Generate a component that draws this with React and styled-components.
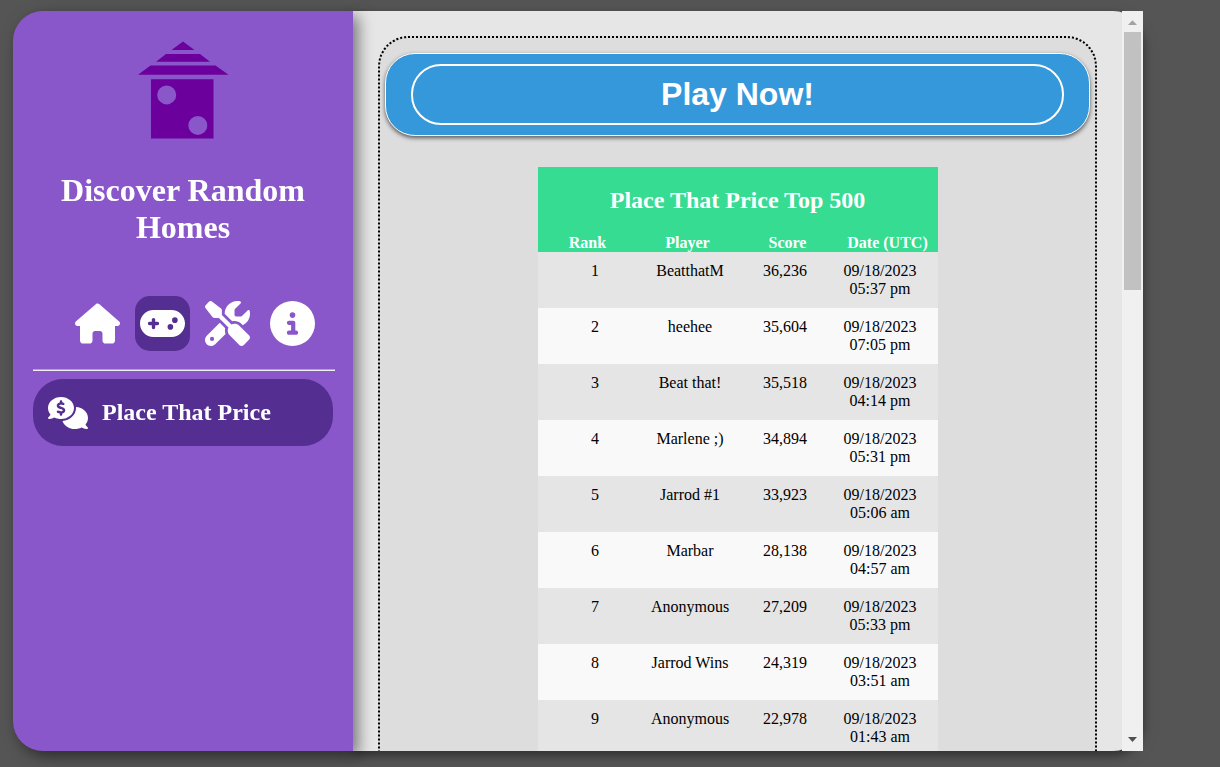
import React from "react";
import styled, { createGlobalStyle } from "styled-components";
import {
  FaHouse,
  FaGamepad,
  FaScrewdriverWrench,
  FaCircleInfo,
  FaCommentsDollar,
} from "react-icons/fa6";

const GlobalStyle = createGlobalStyle`
  *, *::before, *::after { box-sizing: border-box; }
  body {
    margin: 0;
    background: #555;
    color: #000;
    font-family: "Liberation Serif", "Times New Roman", serif;
    font-size: 16px;
    line-height: 18px;
  }
`;

const Page = styled.div`
  display: flex;
  height: 100vh;
  padding: 11px 77px 16px 13px;
`;

const Sidebar = styled.aside`
  position: relative;
  z-index: 1;
  display: flex;
  flex-direction: column;
  flex: 0 0 340px;
  min-width: 0;
  padding: 29px 20px 20px;
  background: #8a57cb;
  border-radius: 30px 0 0 30px;
  box-shadow: 5px 5px 15px rgba(0, 0, 0, 0.5);
`;

const Logo = styled.svg`
  width: 100px;
  height: 100px;
  align-self: center;
  fill: #6b009c;
`;

const SiteTitle = styled.h1`
  margin: 32px 0 50px;
  font-size: 32px;
  line-height: 37px;
  color: #fff;
  text-align: center;
`;

const Nav = styled.nav`
  display: flex;
  gap: 10px;
  padding-left: 37px;
`;

const NavButton = styled.button`
  display: flex;
  align-items: center;
  justify-content: center;
  width: 55px;
  height: 55px;
  padding: 0;
  border: 0;
  border-radius: 15px;
  background: ${(p) => (p.$active ? "#542e90" : "transparent")};
  color: #fff;
  font-size: 45px;
  cursor: pointer;
  svg { flex: none; }
`;

const Divider = styled.hr`
  align-self: stretch;
  margin: 18px -2px 8px 0;
  border: solid;
  border-color: #b3a3c4 #eee #eee #b3a3c4;
  border-width: 1px 0;
`;

const GameLink = styled.a`
  display: flex;
  align-items: center;
  gap: 14px;
  height: 67px;
  padding: 0 15px;
  border-radius: 30px;
  background: #542e90;
  color: #fff;
  font-size: 24px;
  font-weight: bold;
  line-height: 27px;
  text-decoration: none;
  svg { width: 40px; height: 32px; }
`;

const Main = styled.main`
  position: relative;
  flex: 1;
  min-width: 0;
  border-radius: 0 30px 30px 0;
  box-shadow: 0 4px 8px rgba(0, 0, 0, 0.4), 0 6px 20px rgba(0, 0, 0, 0.1);
`;

const ScrollArea = styled.div`
  height: 100%;
  padding: 25px 46px 25px 25px;
  overflow-y: auto;
  scrollbar-width: none;
  background: #e6e6e6;
  border-radius: 0 30px 30px 0;
`;

const Board = styled.section`
  display: flex;
  flex-direction: column;
  align-items: center;
  gap: 31px;
  padding: 15px 5px 60px;
  border: 2px dotted #000;
  border-radius: 30px;
  background: #ddd;
`;

const PlayButton = styled.button`
  align-self: stretch;
  padding: 10px 25px;
  border: 1px solid #fff;
  border-radius: 30px;
  background: #3498db;
  box-shadow: 0 2px 4px rgba(0, 0, 0, 0.6);
  color: #fff;
  font: bold 32px/37px "Liberation Sans", Arial, sans-serif;
  cursor: pointer;
`;

const PlayLabel = styled.span`
  display: block;
  padding: 10px;
  border: 2px solid #fff;
  border-radius: 30px;
`;

const Scores = styled.table`
  display: block;
  width: 400px;
  text-align: center;
`;

const ScoresHead = styled.thead`
  display: block;
  padding-top: 20px;
  background: #36dc92;
  color: #fff;
`;

const ScoresBody = styled.tbody`
  display: block;
`;

const HeadRow = styled.tr`
  display: grid;
  grid-template-columns: repeat(4, 1fr);
`;

const ScoresTitle = styled.th`
  grid-column: 1 / -1;
  padding: 0 0 20px;
  font-size: 24px;
  line-height: 27px;
`;

const HeadCell = styled.th`
  padding: 0;
`;

const ScoreRow = styled.tr`
  display: grid;
  grid-template-columns: repeat(4, 1fr);
  padding: 10px;
  background: #e5e5e5;
  &:nth-child(even) { background: #f9f9f9; }
`;

const ScoreCell = styled.td`
  padding: 0;
`;

const Scrollbar = styled.div`
  position: absolute;
  top: 0;
  right: 0;
  bottom: 0;
  display: flex;
  flex-direction: column;
  width: 21px;
  padding: 0 2px;
  background: #f0f0f0;
`;

const ScrollArrow = styled.svg`
  width: 17px;
  height: 21px;
  fill: ${(p) => (p.$dim ? "#a3a3a3" : "#505050")};
`;

const ScrollTrack = styled.div`
  flex: 1;
`;

const ScrollThumb = styled.div`
  height: 37%;
  background: #c1c1c1;
`;

const scores = [
  ["BeatthatM", "36,236", "09/18/2023 05:37 pm"],
  ["heehee", "35,604", "09/18/2023 07:05 pm"],
  ["Beat that!", "35,518", "09/18/2023 04:14 pm"],
  ["Marlene ;)", "34,894", "09/18/2023 05:31 pm"],
  ["Jarrod #1", "33,923", "09/18/2023 05:06 am"],
  ["Marbar", "28,138", "09/18/2023 04:57 am"],
  ["Anonymous", "27,209", "09/18/2023 05:33 pm"],
  ["Jarrod Wins", "24,319", "09/18/2023 03:51 am"],
  ["Anonymous", "22,978", "09/18/2023 01:43 am"],
];

function HouseLogo() {
  return (
    <Logo viewBox="0 0 100 100" aria-hidden="true">
      <path d="M50 1.5 61.5 10H38.5Z" />
      <path d="M33 14H67L77 21.7H23Z" />
      <path d="M17.5 25.5H82.5L95.5 34.7H5Z" />
      <path
        fillRule="evenodd"
        d="M18 39.3H80.5V98.5H18ZM24.2 54.9a9.500 9.500 0 1 0 19 0a9.500 9.500 0 1 0-19 0ZM55.3 85.4a9.500 9.500 0 1 0 19 0a9.500 9.500 0 1 0-19 0Z"
      />
    </Logo>
  );
}

export default function App() {
  return (
    <>
      <GlobalStyle />
      <Page>
        <Sidebar>
          <HouseLogo />
          <SiteTitle>Discover Random Homes</SiteTitle>
          <Nav>
            <NavButton aria-label="Home"><FaHouse /></NavButton>
            <NavButton aria-label="Games" $active><FaGamepad /></NavButton>
            <NavButton aria-label="Tools"><FaScrewdriverWrench /></NavButton>
            <NavButton aria-label="About"><FaCircleInfo /></NavButton>
          </Nav>
          <Divider />
          <GameLink href="#place-that-price">
            <FaCommentsDollar />
            Place That Price
          </GameLink>
        </Sidebar>
        <Main>
          <ScrollArea>
            <Board>
              <PlayButton>
                <PlayLabel>Play Now!</PlayLabel>
              </PlayButton>
              <Scores>
                <ScoresHead>
                  <HeadRow>
                    <ScoresTitle colSpan={4}>Place That Price Top 500</ScoresTitle>
                  </HeadRow>
                  <HeadRow>
                    <HeadCell>Rank</HeadCell>
                    <HeadCell>Player</HeadCell>
                    <HeadCell>Score</HeadCell>
                    <HeadCell>Date (UTC)</HeadCell>
                  </HeadRow>
                </ScoresHead>
                <ScoresBody>
                  {scores.map(([player, score, date], i) => (
                    <ScoreRow key={i}>
                      <ScoreCell>{i + 1}</ScoreCell>
                      <ScoreCell>{player}</ScoreCell>
                      <ScoreCell>{score}</ScoreCell>
                      <ScoreCell>{date}</ScoreCell>
                    </ScoreRow>
                  ))}
                </ScoresBody>
              </Scores>
            </Board>
          </ScrollArea>
          <Scrollbar aria-hidden="true">
            <ScrollArrow $dim viewBox="0 0 17 21"><path d="M4 14 8.500 9.300 13 14Z" /></ScrollArrow>
            <ScrollTrack><ScrollThumb /></ScrollTrack>
            <ScrollArrow viewBox="0 0 17 21"><path d="M4 7H13L8.500 12Z" /></ScrollArrow>
          </Scrollbar>
        </Main>
      </Page>
    </>
  );
}
